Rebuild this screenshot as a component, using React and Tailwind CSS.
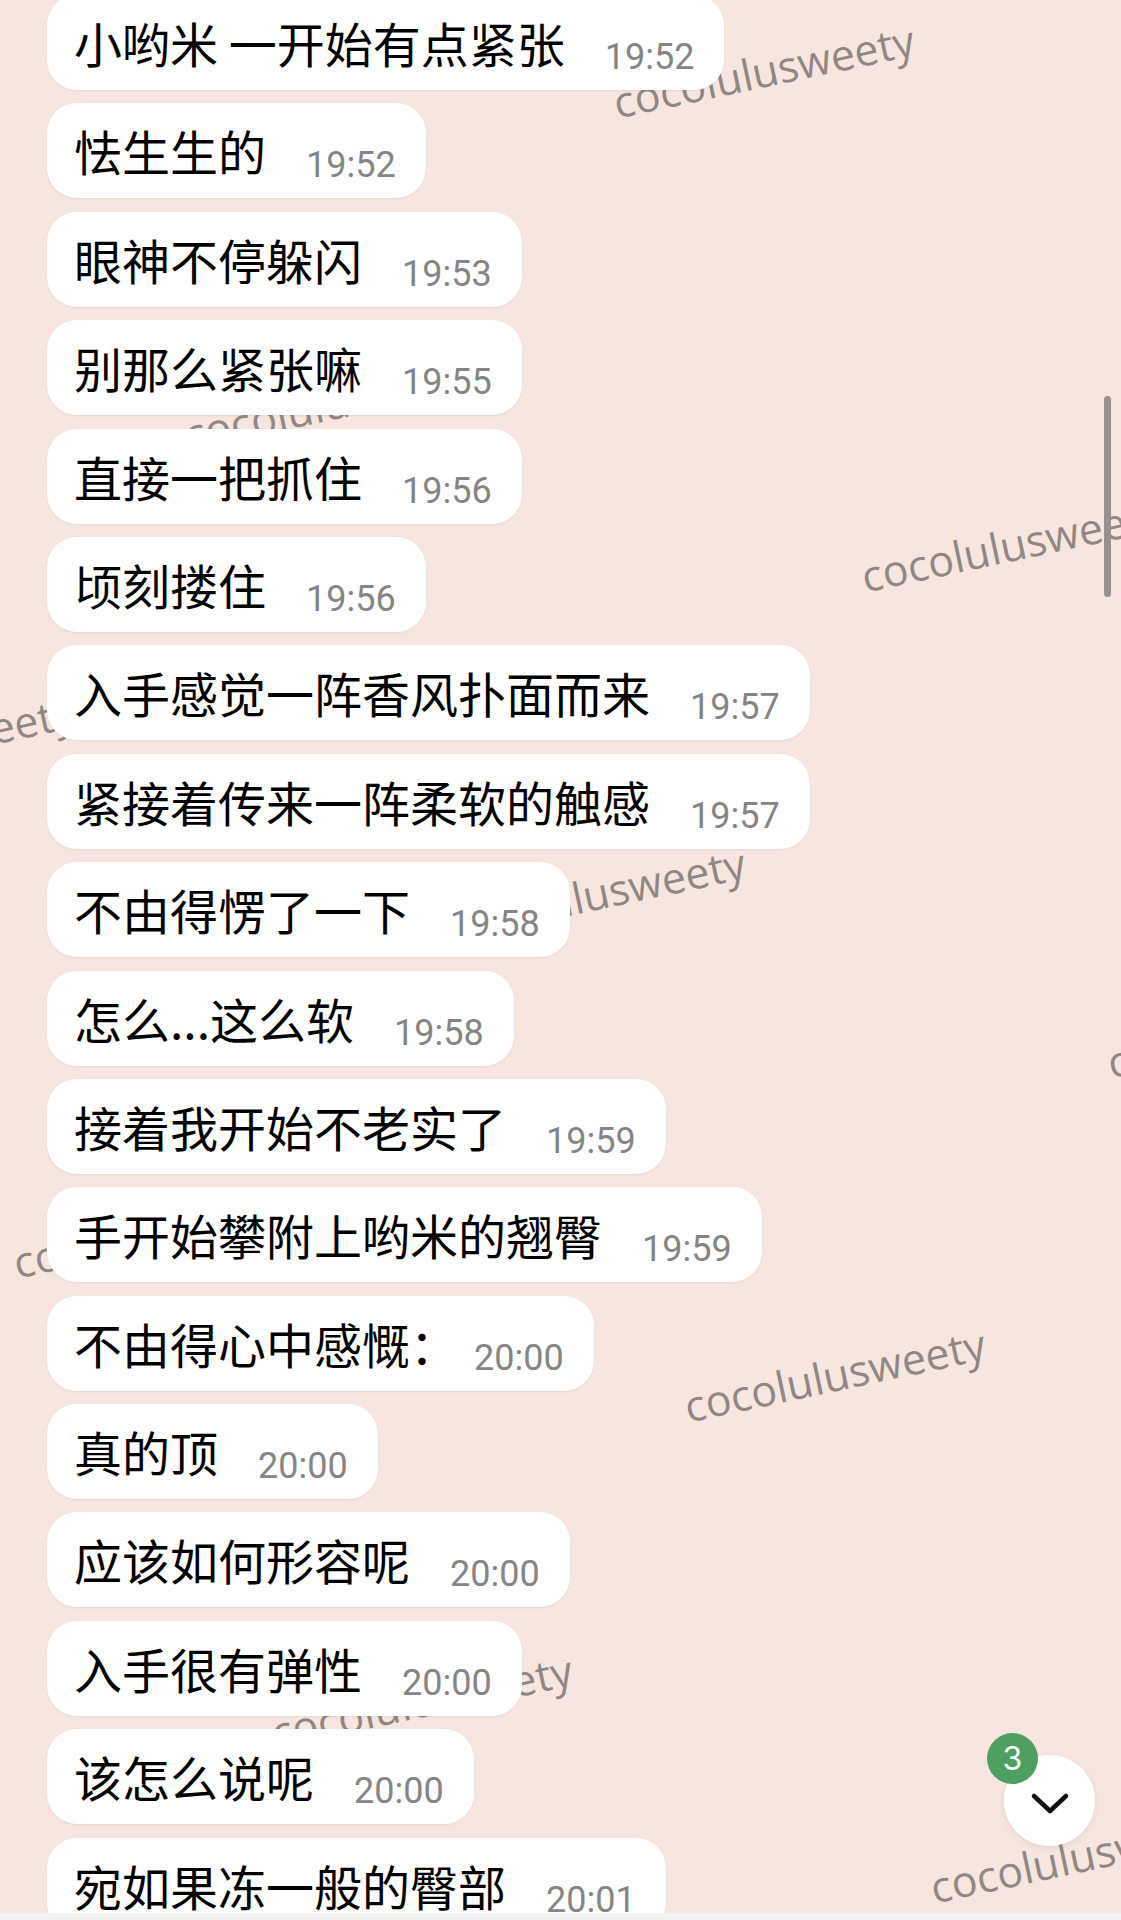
import React from "react";

const messages = [
  { text: "小哟米 一开始有点紧张", time: "19:52" },
  { text: "怯生生的", time: "19:52" },
  { text: "眼神不停躲闪", time: "19:53" },
  { text: "别那么紧张嘛", time: "19:55" },
  { text: "直接一把抓住", time: "19:56" },
  { text: "顷刻搂住", time: "19:56" },
  { text: "入手感觉一阵香风扑面而来", time: "19:57" },
  { text: "紧接着传来一阵柔软的触感", time: "19:57" },
  { text: "不由得愣了一下", time: "19:58" },
  { text: "怎么...这么软", time: "19:58" },
  { text: "接着我开始不老实了", time: "19:59" },
  { text: "手开始攀附上哟米的翘臀", time: "19:59" },
  { text: "不由得心中感慨：", time: "20:00", tight: true },
  { text: "真的顶", time: "20:00" },
  { text: "应该如何形容呢", time: "20:00" },
  { text: "入手很有弹性", time: "20:00" },
  { text: "该怎么说呢", time: "20:00" },
  { text: "宛如果冻一般的臀部", time: "20:01" },
];

const wm =
  "pointer-events-none absolute origin-left -rotate-12 whitespace-nowrap text-[43px] leading-[42px] text-[#6f6866]/75 [font-family:'Open_Sans',sans-serif]";

function Bubble({ text, time, tight }) {
  return (
    <div className="flex h-[95px] w-max items-start rounded-[30px] bg-white pl-[27px] pr-[30px] shadow-[0_1px_2px_rgba(120,90,80,0.10)]">
      <span className="mt-[23px] whitespace-pre text-[48px] leading-[48px] text-black [font-family:'Noto_Sans_CJK_SC',sans-serif]">
        {text}
      </span>
      <span
        className={
          (tight ? "ml-[16px] " : "ml-[40px] ") +
          "mt-[44px] text-[36px] leading-[36px] text-[#858585] [font-family:Roboto,sans-serif]"
        }
      >
        {time}
      </span>
    </div>
  );
}

export default function App() {
  return (
    <div className="relative h-[1920px] w-[1121px] overflow-hidden bg-[#f6e6df]">
      {/* watermarks */}
      <span className={wm + " left-[614px] top-[82px]"}>cocolulusweety</span>
      <span className={wm + " left-[185px] top-[414px]"}>cocolulusweety</span>
      <span className={wm + " left-[862px] top-[556px]"}>cocolulusweety</span>
      <span className={wm + " left-[-226px] top-[754px]"}>cocolulusweety</span>
      <span className={wm + " left-[445px] top-[905px]"}>cocolulusweety</span>
      <span className={wm + " left-[1108px] top-[1042px]"}>cocolulusweety</span>
      <span className={wm + " left-[14px] top-[1242px]"}>cocolulusweety</span>
      <span className={wm + " left-[685px] top-[1386px]"}>cocolulusweety</span>
      <span className={wm + " left-[272px] top-[1712px]"}>cocolulusweety</span>
      <span className={wm + " left-[931px] top-[1867px]"}>cocolulusweety</span>

      {/* messages */}
      <div className="relative z-10 -mt-[5px] flex flex-col gap-[13.4px] pl-[47px]">
        {messages.map((m, i) => (
          <Bubble key={i} {...m} />
        ))}
      </div>

      {/* scrollbar */}
      <div className="absolute left-[1104px] top-[396px] z-20 h-[201px] w-[7px] rounded-full bg-[#9a918e]" />

      {/* scroll-down button */}
      <div className="absolute left-[1004px] top-[1755px] z-20 flex h-[91px] w-[91px] items-center justify-center rounded-full bg-white shadow-[0_2px_6px_rgba(120,90,80,0.12)]">
        <svg width="40" height="26" viewBox="0 0 40 26" fill="none" className="mt-[6px]">
          <path d="M4 5 L20 20 L36 5" stroke="#111" strokeWidth="4.5" strokeLinecap="round" strokeLinejoin="round" />
        </svg>
      </div>
      <div className="absolute left-[987px] top-[1733px] z-30 flex h-[51px] w-[51px] items-center justify-center rounded-full bg-[#4f9f62] text-[32px] leading-none text-white [font-family:Inter,sans-serif]">
        3
      </div>

      {/* bottom strip */}
      <div className="absolute bottom-0 left-0 z-30 h-[7px] w-full bg-[#f3f2f2]" />
    </div>
  );
}
